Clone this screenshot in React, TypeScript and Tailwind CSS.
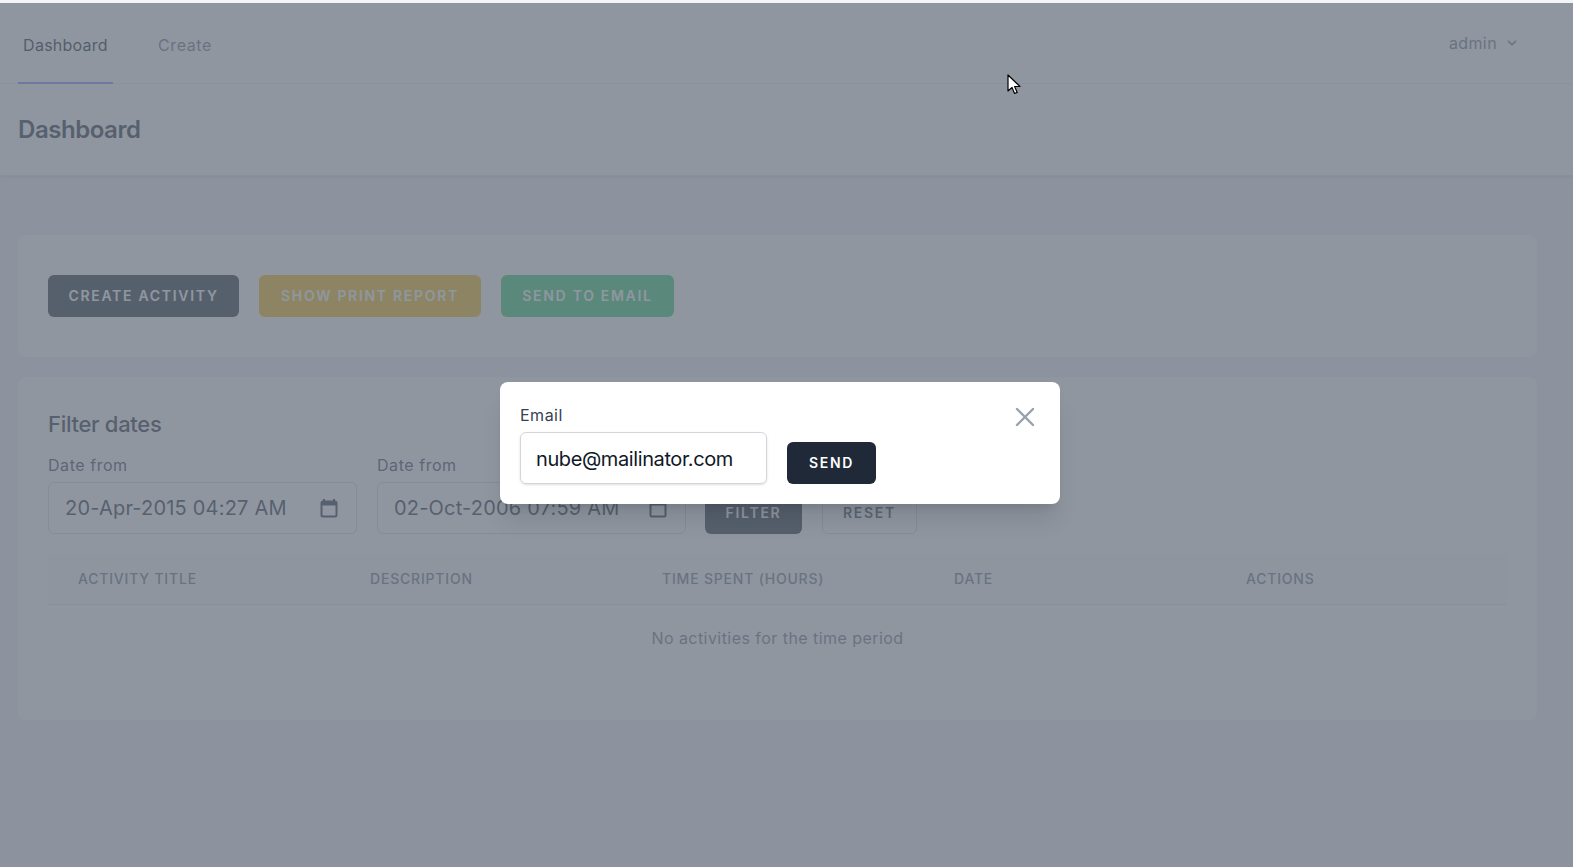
import { X, ChevronDown } from "lucide-react";

const font = { fontFamily: "Inter, 'Noto Sans', sans-serif" };

function CalendarIcon() {
  return (
    <svg width="18" height="20" viewBox="0 0 18 20" fill="none" className="shrink-0 text-gray-800">
      <path d="M4 1v3M14 1v3" stroke="currentColor" strokeWidth="2" />
      <rect x="1.5" y="3.5" width="15" height="15" rx="1.5" stroke="currentColor" strokeWidth="2" />
      <rect x="1.5" y="3.5" width="15" height="4" fill="currentColor" />
    </svg>
  );
}

function DateField({ value }: { value: string }) {
  return (
    <div className="w-[309px]">
      <div className="mb-[5px] h-6 text-base leading-6 tracking-[0.55px] text-gray-700">Date from</div>
      <div className="flex h-[52px] items-center justify-between rounded-md border border-gray-300 bg-white pl-4 pr-[18px]">
        <span className="text-[20px] tracking-[0.2px] text-gray-800">{value}</span>
        <CalendarIcon />
      </div>
    </div>
  );
}

function PageButton({ label, className }: { label: string; className: string }) {
  return (
    <button className={`flex h-[42px] items-center justify-center rounded-md text-sm font-semibold uppercase tracking-[1.7px] ${className}`}>
      {label}
    </button>
  );
}

export default function App() {
  const columns = ["Activity title", "Description", "Time spent (hours)", "Date", "Actions"];

  return (
    <div className="relative h-[867px] overflow-hidden bg-gray-100 pt-[3px]" style={font}>
      <nav className="flex h-[81px] justify-between border-b border-gray-100 bg-white px-[18px]">
        <div className="flex gap-[45px]">
          <a className="flex h-[81px] w-[95px] items-center justify-center border-b-2 border-indigo-400 pt-[5px] text-base tracking-[0.25px] text-gray-900">
            Dashboard
          </a>
          <a className="flex h-[81px] items-center pt-[3px] text-base tracking-[0.6px] text-gray-500">Create</a>
        </div>
        <div className="mr-[36px] flex h-[80px] items-center gap-[8px] text-base tracking-[0.4px] text-gray-500">
          admin
          <ChevronDown size={14} strokeWidth={3} />
        </div>
      </nav>

      <header className="flex h-[92px] items-center border-b border-gray-200 bg-white px-[18px] shadow-sm">
        <h1 className="text-2xl font-semibold tracking-[-0.45px] text-gray-800">Dashboard</h1>
      </header>

      <main className="flex flex-col gap-[20px] pt-[59px] pr-[36px] pl-[18px]">
        <section className="flex h-[122px] items-center gap-5 rounded-lg bg-white px-[30px] pb-[1px]">
          <PageButton label="Create activity" className="w-[191px] bg-[#1f2937] text-white" />
          <PageButton label="Show print report" className="w-[222px] bg-[#f5b90e] text-white" />
          <PageButton label="Send to email" className="w-[173px] bg-[#2cc869] text-white" />
        </section>

        <section className="h-[343px] rounded-lg bg-white px-[30px] pt-[30px]">
          <h2 className="text-[22px] leading-[34px] font-medium tracking-[-0.3px] text-gray-800">Filter dates</h2>
          <div className="mt-[12px] flex items-end gap-5">
            <DateField value="20-Apr-2015 04:27 AM" />
            <DateField value="02-Oct-2006 07:59 AM" />
            <PageButton label="Filter" className="-ml-px w-[97px] bg-[#1f2937] text-white" />
            <PageButton label="Reset" className="w-[95px] border border-gray-300 bg-white text-gray-700" />
          </div>
          <div className="mt-[20px] grid h-[51px] grid-cols-[repeat(5,292px)] items-center overflow-hidden border-b border-gray-200 bg-gray-50 pl-[30px]">
            {columns.map((column) => (
              <div key={column} className="text-sm font-medium tracking-[0.8px] text-gray-500 uppercase">
                {column}
              </div>
            ))}
          </div>
          <div className="pt-[21px] text-center text-base tracking-[0.45px] text-gray-500">
            No activities for the time period
          </div>
        </section>
      </main>

      <div className="absolute inset-x-0 top-[3px] bottom-0 bg-[#6a7380]/75" />

      <div className="absolute top-[382px] left-[500px] flex h-[122px] w-[560px] items-start rounded-lg bg-white pt-[21px] pl-5 shadow-xl">
        <div className="w-[247px]">
          <label className="block h-[24px] text-base leading-6 tracking-[0.5px] text-gray-700">Email</label>
          <input
            readOnly
            value="nube@mailinator.com"
            className="mt-[5px] h-[52px] w-full rounded-md border border-gray-300 pr-4 pl-[15px] pt-[2px] text-[20px] tracking-[-0.4px] text-gray-900 shadow-sm outline-none"
          />
        </div>
        <PageButton label="Send" className="mt-[39px] ml-[20px] w-[89px] bg-[#1f2937] text-white" />
        <X size={32} strokeWidth={1.8} className="absolute top-[19px] right-[19px] text-gray-400" />
      </div>

      <svg width="14" height="22" viewBox="0 0 14 22" className="absolute top-[74px] left-[1007px]">
        <path d="M1 1v16l4-3.5 2.6 6 2.6-1.1-2.6-5.9H13z" fill="#fff" stroke="#000" strokeWidth="1.2" strokeLinejoin="round" />
      </svg>
    </div>
  );
}
